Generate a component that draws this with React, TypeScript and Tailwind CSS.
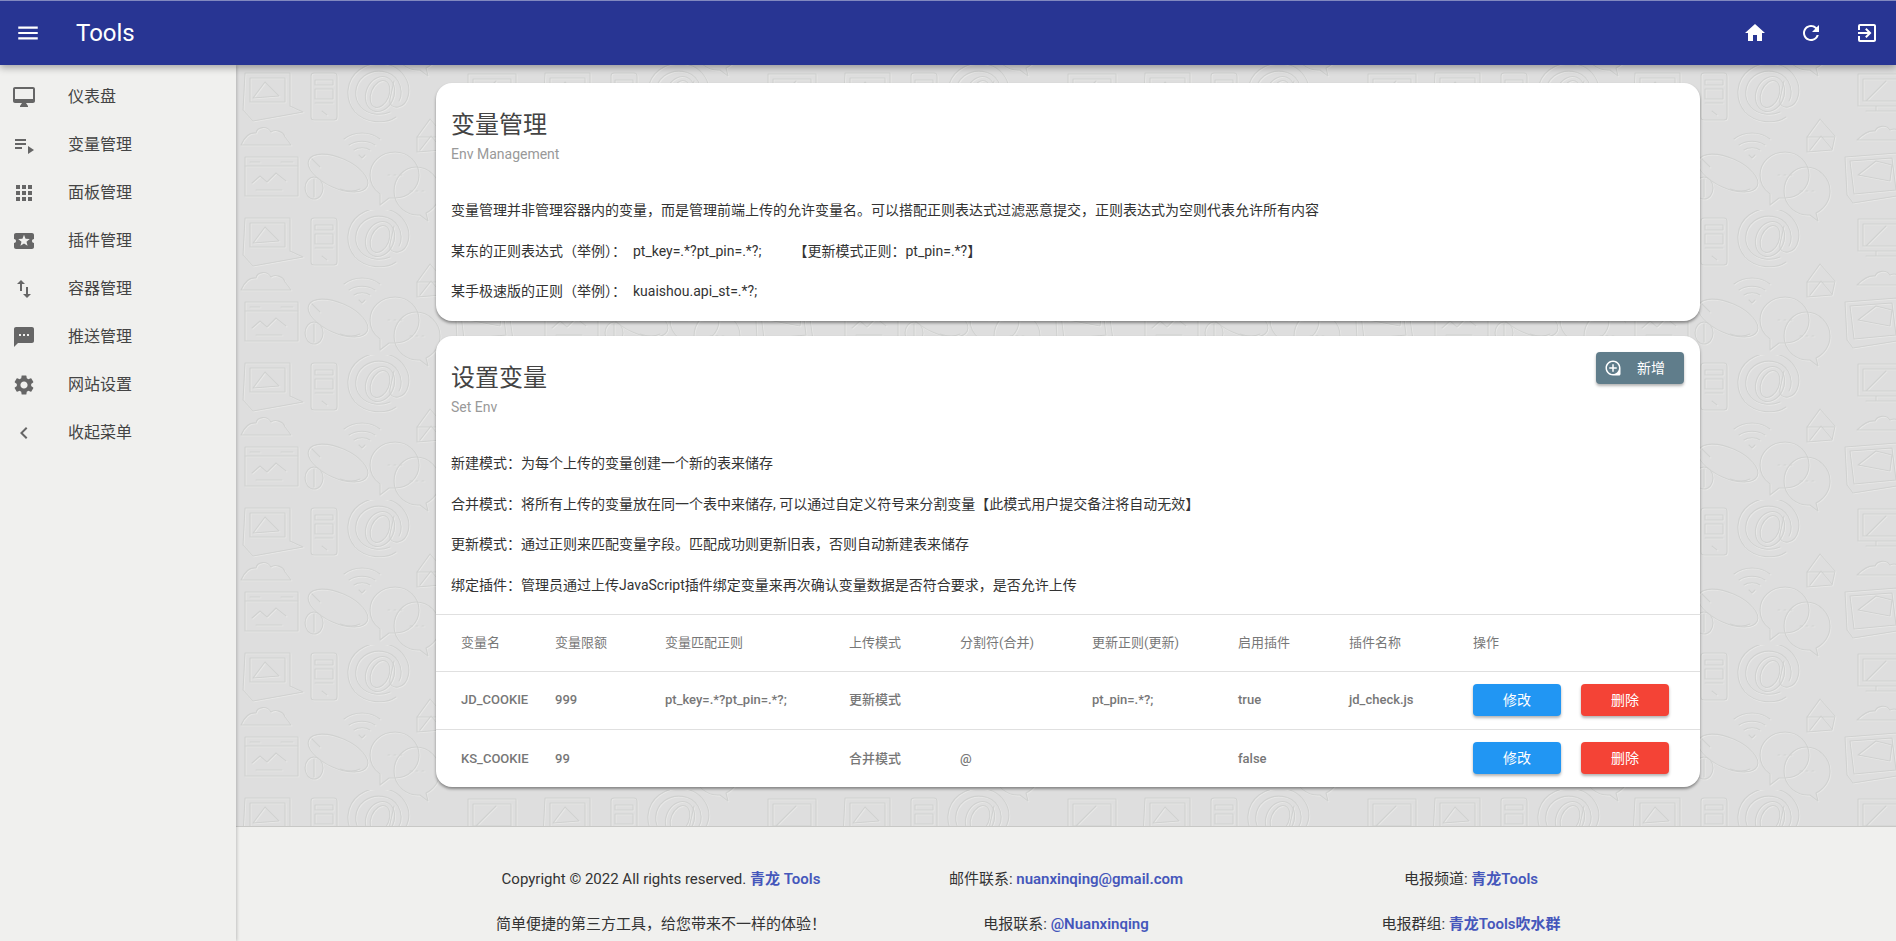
import {
  MdApps,
  MdChevronLeft,
  MdExitToApp,
  MdHome,
  MdImportExport,
  MdLocalPlay,
  MdLoupe,
  MdMenu,
  MdPlaylistPlay,
  MdRefresh,
  MdSettings,
  MdSms,
} from "react-icons/md";

const DesktopIcon = ({ size }: { size: number }) => (
  <svg width={size} height={size} viewBox="0 0 24 24" fill="currentColor">
    <path
      fillRule="evenodd"
      d="M21 2H3c-1.1 0-2 .9-2 2v12c0 1.1.9 2 2 2h7l-2 3v1h8v-1l-2-3h7c1.1 0 2-.9 2-2V4c0-1.1-.9-2-2-2zm0 12H3V4h18v10z"
    />
  </svg>
);

const menu = [
  { label: "仪表盘", icon: DesktopIcon },
  { label: "变量管理", icon: MdPlaylistPlay },
  { label: "面板管理", icon: MdApps },
  { label: "插件管理", icon: MdLocalPlay },
  { label: "容器管理", icon: MdImportExport },
  { label: "推送管理", icon: MdSms },
  { label: "网站设置", icon: MdSettings },
  { label: "收起菜单", icon: MdChevronLeft },
];

const headers = [
  { label: "变量名", className: "w-[119px] pl-[25px]" },
  { label: "变量限额", className: "w-[110px]" },
  { label: "变量匹配正则", className: "w-[184px]" },
  { label: "上传模式", className: "w-[111px]" },
  { label: "分割符(合并)", className: "w-[132px]" },
  { label: "更新正则(更新)", className: "w-[146px]" },
  { label: "启用插件", className: "w-[111px]" },
  { label: "插件名称", className: "w-[124px]" },
  { label: "操作", className: "w-[227px]" },
];

const rows = [
  ["JD_COOKIE", "999", "pt_key=.*?pt_pin=.*?;", "更新模式", "", "pt_pin=.*?;", "true", "jd_check.js"],
  ["KS_COOKIE", "99", "", "合并模式", "@", "", "false", ""],
];

// background doodles, coordinates are relative to one 1390x145 tile
const Doodles = () => (
  <g fill="none" strokeWidth="1.1" strokeLinejoin="round" strokeLinecap="round">
    {/* laptop */}
    <path d="M9 8h45v33l13 6-50 9-10-11z" />
    <path d="M14 13h35v24H14zM17 33l12-16 14 14z" />
    {/* phone */}
    <rect x="75" y="8" width="26" height="47" rx="3" />
    <path d="M79 15h18v5H79zM79 24h18v10H79zM79 38h18M86 46l5 4" />
    {/* at sign */}
    <path d="M160 52c-10 7-30 7-41-5-11-13-9-32 4-42 15-11 37-8 46 7 7 11 4 28-7 30-6 1-9-3-8-8l4-18" />
    <path d="M154 47c-9 4-22 3-29-5-8-9-7-23 3-31 11-8 27-6 34 5 4 7 4 15 1 20" />
    <ellipse cx="144" cy="29" rx="9" ry="14" transform="rotate(22 144 29)" />
    <ellipse cx="144" cy="29" rx="14" ry="18" transform="rotate(22 144 29)" />
    {/* envelope */}
    <path d="M181 72l13-18 15 17-3 14-25 2z" />
    <path d="M181 72l27 0M184 85l11-14 11 13" />
    {/* cloud */}
    <path d="M5 80h50l-6-8c-2-6-10-8-14-5-4-7-14-5-15 1-7-1-12 5-15 12z" />
    {/* wifi */}
    <path d="M108 74c10-8 26-8 36 0M113 80c7-5 19-5 26 0M118 85c4-3 12-3 16 0M123 90l3 3 3-3" />
    {/* big mouse */}
    <ellipse cx="102" cy="108" rx="32" ry="15" transform="rotate(24 102 108)" />
    <path d="M76 94l8 8M124 124c-6 3-14 2-20 0" />
    {/* browser window */}
    <rect x="9" y="92" width="53" height="39" />
    <path d="M9 101h53M14 97h10M45 97h12M16 118l8-7 7 6 9-9 10 8M20 125h26" />
    {/* small mouse */}
    <ellipse cx="78" cy="123" rx="9" ry="11" />
    <path d="M78 114v18" />
    {/* speech bubbles */}
    <path d="M159 87c13 0 24 10 24 23s-11 23-24 23c-2 0-4 0-6 0l-9 7 0-11c-7-5-10-11-10-19 0-13 11-23 25-23z" />
    <path d="M180 102c13 0 24 11 24 24 0 10-6 18-14 22l2 8-8-6c-14 1-26-10-26-24 0-13 10-24 22-24z" />
    <path d="M152 110h2M158 110h2M164 110h2M174 126h2M180 126h2M186 126h2" />
    {/* monitor */}
    <path d="M232 9h48v32h-48zM237 14h38v22h-38zM250 41v5M240 46h30M240 36l20-20" />
    {/* cloud, right */}
    <path d="M231 75h52l-6-6c-3-5-9-6-13-4-4-6-13-4-15 1-7-1-13 4-18 9z" />
    {/* laptop, right */}
    <path d="M219 92l52-4 6 42-50 8-6-8z" />
    <path d="M224 96l42-3 4 32-42 4zM232 110l18-14 16 4-2 16z" />
  </g>
);

const PatternTile = () => (
  <>
    {[0, 300, 600, 900, 1190].map((x) => (
      <g key={x} transform={`translate(${x} 0)`}>
        <g transform="translate(0.8 0.8)" stroke="#e9e9e8">
          <Doodles />
        </g>
        <g stroke="#d0d1d0">
          <Doodles />
        </g>
        <g transform="translate(0.8 -144.2)" stroke="#e9e9e8">
          <Doodles />
        </g>
        <g transform="translate(0 -145)" stroke="#d0d1d0">
          <Doodles />
        </g>
      </g>
    ))}
  </>
);

const Background = () => (
  <svg className="absolute inset-0 h-full w-full" aria-hidden="true">
    <defs>
      <pattern id="doodle" width="1390" height="145" patternUnits="userSpaceOnUse">
        <PatternTile />
      </pattern>
    </defs>
    <rect width="100%" height="100%" fill="url(#doodle)" />
  </svg>
);

const Heading = ({ title, sub }: { title: string; sub: string }) => (
  <div>
    <h2 className="text-2xl leading-8 text-[#444]">{title}</h2>
    <p className="mt-[3px] text-sm leading-5 text-[#999]">{sub}</p>
  </div>
);

const Note = ({ children }: { children: React.ReactNode }) => (
  <p className="mb-[19.5px] text-sm leading-[21px] text-[#333] last:mb-0">{children}</p>
);

const RowButton = ({ label, className }: { label: string; className: string }) => (
  <button
    className={`h-8 w-[88px] rounded-sm text-sm text-white shadow-[0_2px_3px_rgba(0,0,0,0.3)] ${className}`}
  >
    {label}
  </button>
);

export default function App() {
  return (
    <div className="flex h-screen flex-col overflow-hidden font-[family-name:Roboto,'Noto_Sans_CJK_SC',sans-serif]">
      <header className="relative z-20 flex h-[65px] shrink-0 items-center border-t border-t-[#8189bf] bg-[#283593] text-white shadow-[0_3px_7px_rgba(0,0,0,0.3)]">
        <button className="flex w-14 justify-center">
          <MdMenu size={26} />
        </button>
        <h1 className="ml-5 text-2xl">Tools</h1>
        <div className="ml-auto flex pr-px">
          <button className="flex w-14 justify-center">
            <MdHome size={24} />
          </button>
          <button className="flex w-14 justify-center">
            <MdRefresh size={24} />
          </button>
          <button className="flex w-14 justify-center">
            <MdExitToApp size={24} />
          </button>
        </div>
      </header>

      <div className="flex min-h-0 flex-1">
        <aside className="relative z-10 w-[236px] shrink-0 bg-[#f0f0ee] pt-2 shadow-[1px_0_3px_rgba(0,0,0,0.2)]">
          {menu.map((item) => (
            <div key={item.label} className="flex h-12 items-center text-[#444]">
              <div className="flex w-12 justify-center text-[#666]">
                <item.icon size={24} />
              </div>
              <span className="ml-5 text-base">{item.label}</span>
            </div>
          ))}
        </aside>

        <main className="flex min-w-0 flex-1 flex-col overflow-hidden">
          <div className="relative bg-[#dedede] pt-[18px] pb-[39px] pr-[196px] pl-[200px]">
            <Background />

            <section className="relative rounded-2xl bg-white px-[15px] pt-[26px] pb-[19px] shadow-[0_2px_3px_rgba(0,0,0,0.4)]">
              <Heading title="变量管理" sub="Env Management" />
              <div className="mt-9">
                <Note>变量管理并非管理容器内的变量，而是管理前端上传的允许变量名。可以搭配正则表达式过滤恶意提交，正则表达式为空则代表允许所有内容</Note>
                <Note>
                  某东的正则表达式（举例）：<span className="ml-[7px]">pt_key=.*?pt_pin=.*?;</span>
                  <span className="ml-[32px]">【更新模式正则：pt_pin=.*?】</span>
                </Note>
                <Note>
                  某手极速版的正则（举例）：<span className="ml-[7px]">kuaishou.api_st=.*?;</span>
                </Note>
              </div>
            </section>

            <section className="relative mt-[15px] overflow-hidden rounded-2xl bg-white pt-[26px] shadow-[0_2px_3px_rgba(0,0,0,0.4)]">
              <div className="flex items-start justify-between pr-4 pl-[15px]">
                <Heading title="设置变量" sub="Set Env" />
                <button className="-mt-2.5 flex h-8 w-[88px] items-center rounded-sm bg-[#607d8b] pl-2 text-sm text-white shadow-[0_2px_3px_rgba(0,0,0,0.3)]">
                  <MdLoupe size={18} />
                  <span className="ml-[15px]">新增</span>
                </button>
              </div>
              <div className="mt-9 px-[15px] pb-[18px]">
                <Note>新建模式：为每个上传的变量创建一个新的表来储存</Note>
                <Note>合并模式：将所有上传的变量放在同一个表中来储存, 可以通过自定义符号来分割变量【此模式用户提交备注将自动无效】</Note>
                <Note>更新模式：通过正则来匹配变量字段。匹配成功则更新旧表，否则自动新建表来储存</Note>
                <Note>绑定插件：管理员通过上传JavaScript插件绑定变量来再次确认变量数据是否符合要求，是否允许上传</Note>
              </div>

              <table className="w-full table-fixed border-collapse text-left text-[13px] text-[#777]">
                <thead>
                  <tr className="h-[57px] border-y border-[#e0e0e0]">
                    {headers.map((h) => (
                      <th key={h.label} className={`font-normal ${h.className}`}>
                        {h.label}
                      </th>
                    ))}
                  </tr>
                </thead>
                <tbody>
                  {rows.map((row) => (
                    <tr key={row[0]} className="h-[58px] border-b border-[#e0e0e0] last:border-b-0">
                      {row.map((cell, i) => (
                        <td key={i} className={i === 0 ? "pl-[25px] font-medium" : "font-medium"}>
                          {cell}
                        </td>
                      ))}
                      <td>
                        <div className="flex gap-5">
                          <RowButton label="修改" className="bg-[#2196f3]" />
                          <RowButton label="删除" className="bg-[#f44336]" />
                        </div>
                      </td>
                    </tr>
                  ))}
                </tbody>
              </table>
            </section>
          </div>

          <footer className="relative flex-1 border-t border-t-[#c8c8c6] bg-[#f0f0ee] pt-[42px] text-[15px] text-[#333]">
            <div className="mx-auto grid w-[1215px] grid-cols-3 gap-y-6 text-center leading-[21px]">
              <p>
                Copyright © 2022 All rights reserved. <a className="font-semibold text-[#4557bb]">青龙 Tools</a>
              </p>
              <p>
                邮件联系: <a className="font-semibold text-[#4557bb]">nuanxinqing@gmail.com</a>
              </p>
              <p>
                电报频道: <a className="font-semibold text-[#4557bb]">青龙Tools</a>
              </p>
              <p>简单便捷的第三方工具，给您带来不一样的体验！</p>
              <p>
                电报联系: <a className="font-semibold text-[#4557bb]">@Nuanxinqing</a>
              </p>
              <p>
                电报群组: <a className="font-semibold text-[#4557bb]">青龙Tools吹水群</a>
              </p>
            </div>
          </footer>
        </main>
      </div>
    </div>
  );
}
